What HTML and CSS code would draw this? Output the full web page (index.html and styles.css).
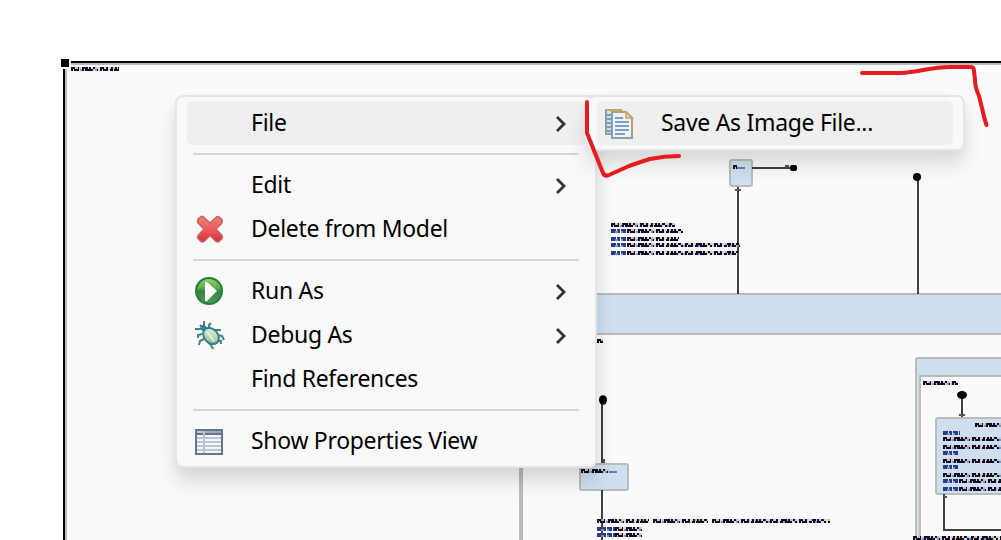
FILE: index.html
```html
<!DOCTYPE html>
<html lang="en">
<head>
<meta charset="utf-8">
<title>State diagram</title>
<link rel="stylesheet" href="styles.css">
</head>
<body>
<main class="canvas">
<svg class="diagram" viewBox="0 0 1001 540" shape-rendering="crispEdges">
  <path fill="#fafafa" d="M67 65h934v475H67z"/>
  <path fill="#000" d="M71 61h930v2H71zM63 69h2v471h-2z"/>
  <path fill="#bbb" d="M71 63h930v2H71zM65 69h2v471h-2z"/>
  <path fill="#fff" d="M65 67h6v2h-6zM69 58h2v9h-2z"/>
  <path fill="#000" d="M61 59h8v8h-8z"/>
  <!-- main region -->
  <path fill="#cfdfef" d="M521 294h480v40H521z"/>
  <path fill="#bbb" d="M521 293h480v2H521zM521 333h480v2H521zM519 335h4v205h-4z"/>
  <!-- nodes -->
  <g fill="#cfdfef" stroke="#bbb" stroke-width="2" shape-rendering="auto">
    <rect x="730" y="160" width="22" height="26" rx="2"/>
    <rect x="580" y="464" width="48" height="26" rx="2"/>
    <path d="M1005 358H918q-2 0-2 2V545h5V376H1005"/>
  </g>
  <path fill="#fafafa" d="M921 377h80v163h-80z"/>
  <path fill="#bbb" d="M919 375h82v2h-82zM919 375h2v165h-2z"/>
  <path fill="#cfdfef" stroke="#bbb" stroke-width="2" shape-rendering="auto" d="M1005 418H938q-2 0-2 2V492q0 2 2 2H1005"/>
  <!-- transitions -->
  <g fill="none" stroke="#404040" stroke-width="2">
    <path d="M752 168H790M738 187V294M918 180V294M602 403V463M602 490V540M962 398V417M944 494V530H1001"/>
    <path d="M735 190h6M785 166h4M959 415h6M944 497h3M917 291h2M604 459v4" stroke="#555"/>
  </g>
  <g shape-rendering="auto">
    <rect x="790" y="165" width="7" height="6" rx="2"/>
    <circle cx="917" cy="177" r="4"/><ellipse cx="603" cy="400" rx="4" ry="4.8"/><ellipse cx="962" cy="395" rx="5" ry="4"/>
  </g>
  <!-- overview-scale labels: a dense line, a broken line below it and tinted gaps -->
  <defs>
    <path id="lines" d="M71 69H119M611 225H675M627 243H684M627 267H680M597 341H603M581 471H610M597 521H649M653 521H708M712 521H830M615 529H642M615 535H642M923 383H958M975 425H1001M943 439H1001M943 447H1001M943 461H1001M943 475H1001M959 481H1001M959 489H1001M913 538H1001M733 167H737"/>
    <path id="rows" d="M71 69H119M611 225H675M627 231H683M627 239H679M627 245H740M627 253H738M597 341H603M581 471H610M597 521H649M653 521H708M712 521H830M615 529H642M615 535H642M923 383H958M975 425H1001M943 439H1001M943 447H1001M943 461H1001M943 475H1001M959 481H1001M959 489H1001M913 538H1001M733 167H737"/>
    <path id="words" d="M611 231H627M611 239H627M611 245H627M611 253H627M597 529H615M597 535H615M943 433H960M943 453H959M943 467H959M943 481H959M943 489H959"/>
  </defs>
  <g fill="none">
    <use href="#rows" class="tint"/>
    <use href="#rows" class="ink upper" y="-1"/>
    <use href="#rows" class="ink lower" y="1"/>
    <use href="#rows" class="accent warm" y="-1"/>
    <use href="#rows" class="accent cool" y="1"/>
    <use href="#words" class="keyword"/>
    <use href="#words" class="keyword-light" y="1"/>
    <path stroke="#6280a8" stroke-width="2" d="M737 168H745M609 472H617"/>
  </g>
</svg>

<nav class="menu menu-main">
  <div class="item active"><span class="icon"></span><span class="label">File</span><svg class="chevron" viewBox="0 0 12 18"><path d="M2 2L9 9L2 16"/></svg></div>
  <hr class="separator">
  <div class="item"><span class="icon"></span><span class="label">Edit</span><svg class="chevron" viewBox="0 0 12 18"><path d="M2 2L9 9L2 16"/></svg></div>
  <div class="item">
    <svg class="icon" viewBox="0 0 28 28"><defs><linearGradient id="red" x2="0" y2="1"><stop stop-color="#e5847b"/><stop offset=".5" stop-color="#ef5b5d"/><stop offset="1" stop-color="#d52b3b"/></linearGradient></defs><path fill="url(#red)" stroke="#cf605c" stroke-width="1.6" stroke-linejoin="round" d="M6 1.500Q8 1 9.500 3L15 8L20.500 3Q22 1 24 2L26.500 4Q28 6.500 26.500 8.500L21 14L26.500 20Q28 22 27 23.500L24 26.500Q22 27.500 20.500 26L15 20.500L9.500 26Q8 27.500 6 26.500L3 23.500Q2 22 3.500 20L9 14L3.500 8.500Q2 6.500 3 4Z"/></svg>
    <span class="label">Delete from Model</span>
  </div>
  <hr class="separator">
  <div class="item">
    <svg class="icon" viewBox="0 0 28 28"><defs><linearGradient id="green" x2="0" y2="1"><stop stop-color="#9ad36e"/><stop offset=".38" stop-color="#62ac45"/><stop offset=".5" stop-color="#358345"/><stop offset="1" stop-color="#4c9c50"/></linearGradient></defs><circle cx="14" cy="14" r="13" fill="url(#green)" stroke="#267d40" stroke-width="2"/><path fill="#fff" d="M10 5L12 5L22 14L12 24L10 24Z"/></svg>
    <span class="label">Run As</span><svg class="chevron" viewBox="0 0 12 18"><path d="M2 2L9 9L2 16"/></svg>
  </div>
  <div class="item">
    <svg class="icon" viewBox="0 0 28 28"><defs><linearGradient id="bug" x2="1" y2="1"><stop stop-color="#e1f0df"/><stop offset=".5" stop-color="#bfdbb8"/><stop offset="1" stop-color="#75ad68"/></linearGradient></defs><g fill="none" stroke="#47817a" stroke-width="2"><path d="M9 6V0M6 8H0M14 7V4L16 2M19 9H26M22 14L27 15L29 19M7 13L3 14V17M9 18L5 20L4 24M13 21L16 24L18 28M22 20H26V23M7 6L5 4"/></g><ellipse cx="9" cy="7.500" rx="4" ry="3" transform="rotate(45 9 7.500)" fill="#347d92"/><ellipse cx="16" cy="15" rx="9" ry="6.800" transform="rotate(48 16 15)" fill="url(#bug)" stroke="#347d96" stroke-width="2"/><path d="M12 11L19 20" stroke="#e9f2dc" stroke-width="2"/></svg>
    <span class="label">Debug As</span><svg class="chevron" viewBox="0 0 12 18"><path d="M2 2L9 9L2 16"/></svg>
  </div>
  <div class="item"><span class="icon"></span><span class="label">Find References</span></div>
  <hr class="separator">
  <div class="item">
    <svg class="icon" viewBox="0 0 28 28" shape-rendering="crispEdges"><path fill="#66768f" d="M0 2h28v26H0z"/><path fill="#f5f7fb" d="M2 8h24v18H2z"/><path fill="#bac6d7" d="M2 4h24v2H2zM2 10h24v2H2zM2 14h24v2H2zM2 18h24v2H2zM2 22h24v2H2z"/><path fill="#b9c3d2" d="M8 4h2v22H8z"/><path fill="#a0abbd" d="M10 4h16v2H10z"/></svg>
    <span class="label">Show Properties View</span>
  </div>
</nav>

<nav class="menu menu-sub">
  <div class="item active">
    <svg class="icon" viewBox="0 0 28 30"><g stroke-width="2"><path fill="#cce0ed" stroke="#8da0a4" d="M1 1H16V25H1Z"/><path fill="none" stroke="#bca778" d="M1 1H16L20 5"/><path fill="none" stroke="#7f9cbb" d="M2 6H6M2 10H6M2 14H6M2 18H6M2 22H6"/><path fill="#eaf4fa" stroke="#8ba1aa" d="M7 3H21L27 9V29H7Z"/><path fill="none" stroke="#bba16c" d="M7 3H21L27 9V23"/><path fill="#f1d9a5" stroke="#c3a368" stroke-width="1.500" d="M21 3V9H27Z"/><path fill="none" stroke="#819ec2" d="M10 9H18M10 13H24M10 17H24M10 21H24M10 25H20"/></g></svg>
    <span class="label">Save As Image File...</span>
  </div>
</nav>

<svg class="markup" viewBox="0 0 1001 540">
  <path d="M862 73H900C920 72 930 67 950 67L971 67Q974 67 974 71L975 80Q975 87 979 96L982 108Q984 118 986.500 125"/>
  <path d="M587 102V133L589 138L603 173Q605 177 609 175L629 166Q640 162 650 159Q664 156 679 156"/>
</svg>
</main>
</body>
</html>
```

FILE: styles.css
```css
* { box-sizing: border-box; }
body { margin: 0; background: #fff; font-family: "Noto Sans", "Open Sans", sans-serif; }
.canvas { position: relative; width: 1001px; height: 540px; overflow: hidden; }
.diagram { display: block; width: 1001px; height: 540px; }
.tint { stroke: #b9b6d0; stroke-width: 4; opacity: .55; }
.ink { stroke: #140c24; stroke-width: 2; }
.upper { stroke-dasharray: 4 2 2 3 6 1 2 2 3 4; }
.lower { stroke-dasharray: 2 1 5 2 3 1 8 3 2 2; }
.accent { stroke-width: 2; }
.warm { stroke: #e9b87c; stroke-dasharray: 0 5 2 17 2 11; }
.cool { stroke: #7196dc; stroke-dasharray: 0 9 2 13 2 21; }
.keyword { stroke: #263c88; stroke-width: 4; stroke-dasharray: 5 1 3 1; }
.keyword-light { stroke: #7d8fc4; stroke-width: 2; stroke-dasharray: 0 4 3 3 2 2; }
.menu { position: absolute; background: #f9f9f9; border: 2px solid #e5e5e5; border-radius: 8px; }
.menu-main { left: 175px; top: 95px; width: 422px; height: 373px; padding: 4px 10px; box-shadow: 0 14px 20px rgba(0,0,0,.13), 0 4px 14px rgba(0,0,0,.03); }
.menu-sub { left: 587px; top: 95px; width: 378px; height: 56px; padding: 4px 10px 4px 8px; border-left-color: #f9f9f9; box-shadow: 0 14px 20px rgba(0,0,0,.12), 0 3px 14px rgba(0,0,0,.03); }
.item { height: 44px; display: flex; align-items: center; padding: 0 18px 0 8px; border-radius: 6px; }
.active { background: #efefef; }
.icon { width: 28px; height: 28px; flex: none; overflow: visible; }
.menu-sub .icon { height: 30px; margin-top: 2px; }
.label { margin-left: 28px; flex: 1; white-space: nowrap; color: #000; font-size: 24px; line-height: 42px; height: 44px; letter-spacing: -.3px; transform: scaleX(.957); transform-origin: left; }
.chevron { width: 12px; height: 18px; flex: none; margin-top: 2px; }
.chevron path { fill: none; stroke: #333; stroke-width: 2.8; }
.separator { height: 2px; margin: 8px 6px; border: 0; background: #d5d5d5; }
.markup { position: absolute; inset: 0; width: 1001px; height: 540px; fill: none; stroke: #e81b1e; stroke-width: 4; stroke-linecap: round; stroke-linejoin: round; }
```
